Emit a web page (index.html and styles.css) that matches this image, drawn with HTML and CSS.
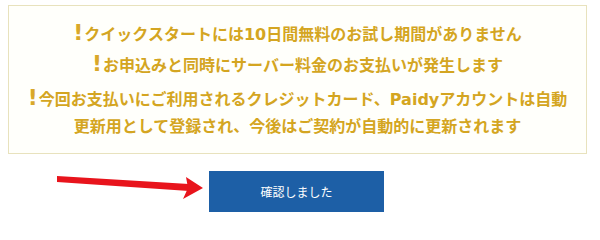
FILE: index.html
```html
<!DOCTYPE html>
<html lang="ja">
<head>
<meta charset="utf-8">
<link rel="stylesheet" href="styles.css">
</head>
<body>
<div class="notice">
  <p class="line"><span class="bang">!</span>クイックスタートには10日間無料のお試し期間がありません</p>
  <p class="line line-second"><span class="bang">!</span>お申込みと同時にサーバー料金のお支払いが発生します</p>
  <p class="line line-third"><span class="bang">!</span>今回お支払いにご利用されるクレジットカード、Paidyアカウントは自動<br>更新用として登録され、今後はご契約が自動的に更新されます</p>
</div>
<div class="action-row">
  <svg class="arrow" width="154" height="40" viewBox="0 0 154 40">
    <polygon points="2,5 134,13 134,20 2,11" fill="#e8141c"/>
    <polygon points="131,6 148,17 128,28 133,17" fill="#e8141c"/>
  </svg>
  <button class="confirm">確認しました</button>
</div>
</body>
</html>
```
FILE: styles.css
```css
html, body {
  margin: 0;
  padding: 0;
  background: #ffffff;
}
body {
  width: 600px;
  height: 220px;
  overflow: hidden;
}
.notice {
  margin: 5px 0 0 8px;
  width: 579px;
  height: 149px;
  box-sizing: border-box;
  border: 1px solid #e8e2bd;
  background: #fffffb;
  padding: 15px 0 0 0;
  display: flex;
  flex-direction: column;
  text-align: center;
}
.line {
  margin: 0;
  font-family: "DejaVu Sans", "Noto Sans CJK JP", sans-serif;
  font-weight: 700;
  font-size: 16px;
  line-height: 27px;
  color: #d4a521;
}
.line-second {
  margin-top: 4px;
}
.line-third {
  margin-top: 7px;
}
.bang {
  font-family: "DejaVu Sans", sans-serif;
  font-size: 22px;
  font-weight: 900;
  line-height: 0;
  margin-right: 1px;
  color: #d9a82a;
}
.action-row {
  display: flex;
  align-items: flex-start;
  margin-top: 17px;
  padding-left: 55px;
}
.arrow {
  display: block;
  flex: none;
}
.confirm {
  width: 175px;
  height: 41px;
  border: none;
  border-radius: 0;
  background: #1d5fa6;
  color: #ffffff;
  font-family: "Noto Sans CJK JP", sans-serif;
  font-size: 12px;
  padding: 0;
  cursor: pointer;
}
```
